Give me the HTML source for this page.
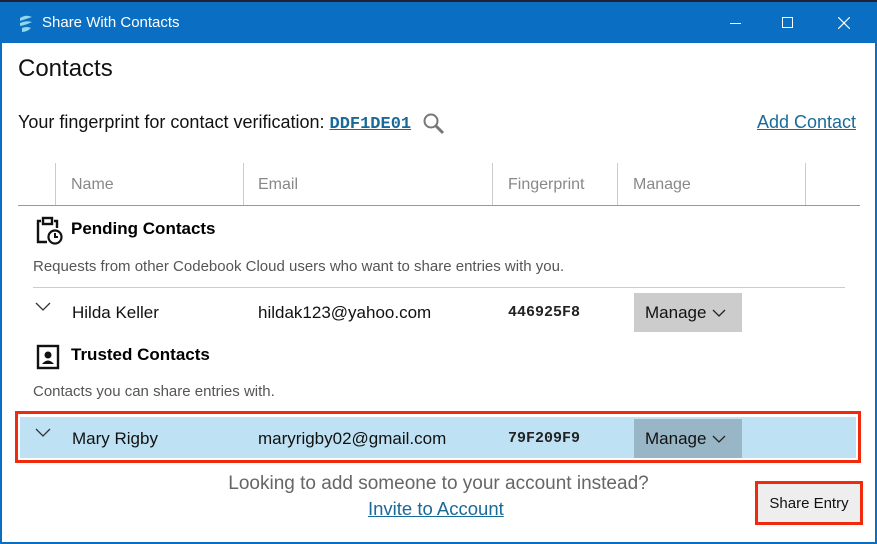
<!DOCTYPE html>
<html><head><style>
*{margin:0;padding:0;box-sizing:border-box}
body{width:877px;height:544px;overflow:hidden;background:#fff;font-family:"Liberation Sans",sans-serif;position:relative}
.a{position:absolute;white-space:nowrap}
.v{position:absolute;top:163px;height:42px;width:1px;background:#ccc}
.h{color:#888;font-size:16px}
.btn{position:absolute;background:#ccc;font-size:17px;color:#111;padding:10px 0 0 11px}
.mono{font-family:'Liberation Mono',monospace;font-weight:bold;font-size:15px;color:#222}
</style></head><body>
<div class="a" style="left:0;top:0;width:877px;height:544px;border:2px solid #0a6fc2;border-top:0"></div>
<div class="a" style="left:0;top:0;width:877px;height:43px;background:#0a6fc2"></div>
<div class="a" style="left:0;top:0;width:877px;height:2px;background:#223"></div>
<svg class="a" style="left:17px;top:14px" width="18" height="20" viewBox="0 0 18 20"><path d="M3 4 Q9 0 15 3 Q9 5 3 7Z M3 9 Q9 6 15 8 Q9 11 3 12Z M5 14 Q10 12 14 14 Q10 18 5 18Z" fill="#8fd6ee"/></svg>
<div class="a" style="left:42px;top:14px;color:#fff;font-size:15px">Share With Contacts</div>
<div class="a" style="left:730px;top:23px;width:11px;height:1px;background:#fff"></div>
<div class="a" style="left:782px;top:17px;width:11px;height:11px;border:1px solid #fff"></div>
<svg class="a" style="left:838px;top:17px" width="12" height="12"><path d="M0 0L12 12M12 0L0 12" stroke="#fff" stroke-width="1.2"/></svg>
<div class="a" style="left:18px;top:55px;font-size:24px;color:#111">Contacts</div>
<div class="a" style="left:18px;top:112px;font-size:18px;color:#111">Your fingerprint for contact verification: <span style="font-family:'Liberation Mono',monospace;font-weight:bold;color:#1a6a99;text-decoration:underline;font-size:17px">DDF1DE01</span></div>
<svg class="a" style="left:422px;top:112px" width="24" height="24"><circle cx="9" cy="9" r="6.5" fill="none" stroke="#777" stroke-width="2"/><path d="M14 14 L21 21" stroke="#777" stroke-width="3"/></svg>
<div class="a" style="left:757px;top:112px;font-size:18px;color:#1a6a99;text-decoration:underline">Add Contact</div>
<div class="v" style="left:55px"></div><div class="v" style="left:243px"></div><div class="v" style="left:492px"></div><div class="v" style="left:617px"></div><div class="v" style="left:805px"></div>
<div class="a" style="left:18px;top:205px;width:842px;height:1px;background:#999"></div>
<div class="a h" style="left:71px;top:176px">Name</div>
<div class="a h" style="left:258px;top:176px">Email</div>
<div class="a h" style="left:508px;top:176px">Fingerprint</div>
<div class="a h" style="left:633px;top:176px">Manage</div>
<svg class="a" style="left:35px;top:216px" width="28" height="30" viewBox="0 0 28 30"><path d="M6 5 H3 V26 H12 M19 5 H22 V12" fill="none" stroke="#111" stroke-width="2.4"/><rect x="8" y="2" width="9" height="6" fill="none" stroke="#111" stroke-width="2.4"/><circle cx="20" cy="21" r="6.5" fill="#fff" stroke="#111" stroke-width="2.2"/><path d="M20 17 V21 H23" fill="none" stroke="#111" stroke-width="2"/></svg>
<div class="a" style="left:71px;top:219px;font-size:17px;font-weight:bold;color:#000">Pending Contacts</div>
<div class="a" style="left:33px;top:258px;font-size:15px;color:#555">Requests from other Codebook Cloud users who want to share entries with you.</div>
<div class="a" style="left:33px;top:287px;width:812px;height:1px;background:#ccc"></div>
<svg class="a" style="left:35px;top:302px" width="16" height="10"><path d="M1 1L8 8L15 1" fill="none" stroke="#333" stroke-width="1.3"/></svg>
<div class="a" style="left:72px;top:303px;font-size:17px;color:#111">Hilda Keller</div>
<div class="a" style="left:258px;top:303px;font-size:17px;color:#111">hildak123@yahoo.com</div>
<div class="a mono" style="left:508px;top:304px">446925F8</div>
<div class="btn" style="left:634px;top:293px;width:108px;height:39px">Manage<svg style="margin-left:6px" width="14" height="9"><path d="M1 1L7 7L13 1" fill="none" stroke="#222" stroke-width="1.3"/></svg></div>
<svg class="a" style="left:36px;top:344px" width="24" height="26"><rect x="2" y="2" width="20" height="22" fill="none" stroke="#111" stroke-width="2.4"/><circle cx="12" cy="11" r="3.5" fill="#111"/><path d="M6 20 Q12 13 18 20Z" fill="#111"/></svg>
<div class="a" style="left:71px;top:345px;font-size:17px;font-weight:bold;color:#000">Trusted Contacts</div>
<div class="a" style="left:33px;top:383px;font-size:15px;color:#555">Contacts you can share entries with.</div>
<div class="a" style="left:15px;top:411px;width:846px;height:52px;border:3px solid #f02a0c"></div>
<div class="a" style="left:20px;top:417px;width:836px;height:41px;background:#bee2f4"></div>
<svg class="a" style="left:35px;top:428px" width="16" height="10"><path d="M1 1L8 8L15 1" fill="none" stroke="#333" stroke-width="1.3"/></svg>
<div class="a" style="left:72px;top:429px;font-size:17px;color:#111">Mary Rigby</div>
<div class="a" style="left:258px;top:429px;font-size:17px;color:#111">maryrigby02@gmail.com</div>
<div class="a mono" style="left:508px;top:430px">79F209F9</div>
<div class="btn" style="left:634px;top:419px;width:108px;height:39px;background:#99b6c6">Manage<svg style="margin-left:6px" width="14" height="9"><path d="M1 1L7 7L13 1" fill="none" stroke="#222" stroke-width="1.3"/></svg></div>
<div class="a" style="left:0;width:877px;top:473px;text-align:center;font-size:19px;color:#666">Looking to add someone to your account instead?</div>
<div class="a" style="left:368px;top:498px;font-size:18.5px;color:#1a6a99;text-decoration:underline">Invite to Account</div>
<div class="a" style="left:755px;top:481px;width:108px;height:44px;border:3px solid #f02a0c;background:#eee;font-size:15px;color:#111;padding:11px 0 0 0;text-align:center">Share Entry</div>
</body></html>
